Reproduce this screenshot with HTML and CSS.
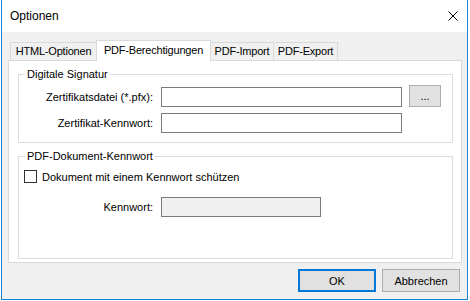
FILE: index.html
```html
<!DOCTYPE html>
<html lang="de">
<head>
  <meta charset="UTF-8">
  <title>Optionen</title>
  <link rel="stylesheet" href="styles.css">
</head>
<body>
  <div class="window">
    <div class="titlebar">
      <span class="title">Optionen</span>
      <svg class="close" width="10" height="10" viewBox="0 0 10 10">
        <path d="M0.5 0.5 L9.5 9.5 M9.5 0.5 L0.5 9.5" stroke="#000" stroke-width="1" fill="none"/>
      </svg>
    </div>
    <div class="client">
      <div class="tabs">
        <div class="tab tab-html">HTML-Optionen</div>
        <div class="tab tab-perm active">PDF-Berechtigungen</div>
        <div class="tab tab-import">PDF-Import</div>
        <div class="tab tab-export">PDF-Export</div>
      </div>
      <div class="panel">
        <fieldset class="group">
          <legend>Digitale Signatur</legend>
          <div class="form-row first">
            <label for="pfx">Zertifikatsdatei (*.pfx):</label>
            <input type="text" id="pfx" class="field">
            <button class="btn browse">...</button>
          </div>
          <div class="form-row">
            <label for="certpw">Zertifikat-Kennwort:</label>
            <input type="text" id="certpw" class="field">
          </div>
        </fieldset>
        <fieldset class="group grow">
          <legend>PDF-Dokument-Kennwort</legend>
          <div class="check-row">
            <input type="checkbox" id="protect" class="check">
            <label for="protect">Dokument mit einem Kennwort schützen</label>
          </div>
          <div class="form-row pw-row">
            <label for="docpw">Kennwort:</label>
            <input type="text" id="docpw" class="field short" disabled>
          </div>
        </fieldset>
      </div>
      <div class="actions">
        <button class="btn default">OK</button>
        <button class="btn">Abbrechen</button>
      </div>
    </div>
  </div>
</body>
</html>
```

FILE: styles.css
```css
* { box-sizing: border-box; }
body { margin: 0; background: #fff; font-family: "Liberation Sans", Arial, sans-serif; font-size: 11px; color: #000; }
.window { margin-left: 1px; width: 467px; height: 300px; border: 1px solid #1883d7; border-top: none; display: flex; flex-direction: column; }
.titlebar { height: 32px; background: #fff; display: flex; align-items: center; justify-content: space-between; padding: 0 9px 0 8px; }
.title { font-size: 12px; }
.client { flex: 1; background: #f0f0f0; display: flex; flex-direction: column; }

.tabs { display: flex; align-items: flex-end; height: 20px; margin-top: 8px; padding-left: 8px; }
.tab { height: 18px; line-height: 17px; text-align: center; border: 1px solid #d9d9d9; border-bottom: none; background: #f0f0f0; margin-left: -1px; white-space: nowrap; letter-spacing: -0.2px; }
.tab:first-child { margin-left: 0; }
.tab.active { height: 21px; line-height: 19px; margin-bottom: -1px; background: #fff; position: relative; z-index: 1; }
.tab-html { width: 87px; }
.tab-perm { width: 115px; }
.tab-import { width: 64px; }
.tab-export { width: 65px; }

.panel { height: 203px; margin: 0 5px 0 6px; border: 1px solid #d9d9d9; background: #fff; display: flex; flex-direction: column; padding: 6px 8px 3px 9px; }
.group { margin: 0; padding: 4px 0 9px 0; border: 1px solid #dcdcdc; min-width: 0; }
.group + .group { margin-top: 6px; padding-top: 7px; }
.group legend { margin-left: 6px; padding: 0 2px; line-height: 14px; }
.grow { flex: 1; }

.form-row { display: flex; align-items: flex-end; margin-top: 6px; }
.form-row.first { margin-top: 0; }
.form-row label { width: 134px; text-align: right; line-height: 20px; margin-right: 8px; white-space: nowrap; }
.field { width: 241px; height: 20px; border: 1px solid #7a7a7a; background: #fff; padding: 0 3px; font: inherit; }
.field.short { width: 160px; }
.field:disabled { background: #f0f0f0; }

.btn { font: inherit; color: #000; background: #e1e1e1; border: 1px solid #adadad; padding: 0; }
.browse { width: 32px; height: 22px; margin-left: 7px; line-height: 16px; }

.check-row { display: flex; align-items: center; padding-left: 5px; height: 13px; }
.check { appearance: none; -webkit-appearance: none; width: 13px; height: 13px; margin: 0 5px 0 0; border: 1px solid #333; background: #fff; }
.pw-row { margin-top: 14px; }

.actions { display: flex; justify-content: flex-end; gap: 6px; padding: 6px 7px 0 0; }
.actions .btn { width: 78px; height: 23px; }
.actions .default { border: 2px solid #0078d7; }
```
